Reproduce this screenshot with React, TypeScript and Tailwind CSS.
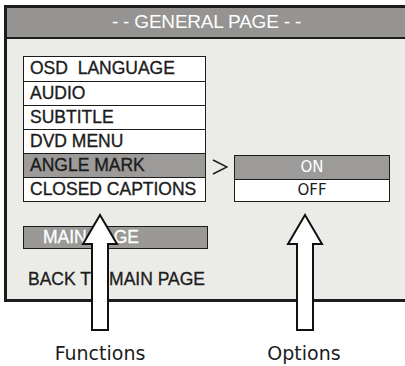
const functions = [
  "OSD  LANGUAGE",
  "AUDIO",
  "SUBTITLE",
  "DVD MENU",
  "ANGLE MARK",
  "CLOSED CAPTIONS",
];

const selected = "ANGLE MARK";

function UpArrow({ x }: { x: number }) {
  // tip at y=215, head base y=244, shaft down to y=330
  const d = `M ${x} 215 L ${x + 17} 244 L ${x + 8} 244 L ${x + 8} 330 L ${x - 8} 330 L ${x - 8} 244 L ${x - 17} 244 Z`;
  return <path d={d} fill="#fff" stroke="#111" strokeWidth="2" strokeLinejoin="miter" />;
}

export default function App() {
  return (
    <div className="relative h-[366px] w-[405px] overflow-hidden bg-white font-['Liberation_Sans',Arial,sans-serif]">
      <div className="ml-[4px] mt-[5px] w-[420px] border-y-[3px] border-l-[3px] border-[#1c1c1c] bg-[#ebebe7]">
        <div className="flex h-[31px] items-center border-b-[2px] border-[#1c1c1c] bg-[#959492] pr-[18px]">
          <span className="w-full text-center text-[19px] tracking-[-0.2px] text-white">- - GENERAL PAGE - -</span>
        </div>

        <div className="px-[16px] pt-[17px]">
          <div className="flex">
            <div className="w-[183px] border-[1.5px] border-[#1c1c1c]">
              {functions.map((name, i) => (
                <div
                  key={name}
                  className={
                    (name === selected ? "bg-[#9c9b99] " : "bg-white ") +
                    (i > 0 ? "border-t-[1.5px] border-[#1c1c1c] " : "") +
                    "flex h-[24px] items-center whitespace-pre pl-[6px] text-[17.5px] leading-none text-[#1c1c1c] [-webkit-text-stroke:0.35px_#1c1c1c]"
                  }
                >
                  {name}
                </div>
              ))}
            </div>

            <div className="flex flex-col justify-end">
              <div className="flex">
                <div className="flex h-[24px] w-[28px] items-center justify-center">
                  <svg width="16" height="16" viewBox="0 0 16 16">
                    <polyline points="1,1 15,8 1,15" fill="none" stroke="#1c1c1c" strokeWidth="1.4" />
                  </svg>
                </div>
                <div className="w-[156px] border-[1.5px] border-[#1c1c1c] font-['DejaVu_Sans',Verdana,sans-serif] text-[15px]">
                  <div className="flex h-[23px] items-center justify-center bg-[#9c9b99] text-white">ON</div>
                  <div className="flex h-[22px] items-center justify-center border-t-[1.5px] border-[#1c1c1c] bg-white text-[#1c1c1c]">
                    OFF
                  </div>
                </div>
              </div>
            </div>
          </div>

          <div className="mt-[24px] flex h-[23px] w-[185px] items-center border-[1.5px] border-[#1c1c1c] bg-[#9a9997] pl-[19px] text-[17.5px] text-white [-webkit-text-stroke:0.3px_#ffffff]">
            MAIN PAGE
          </div>

          <div className="pb-[10px] pl-[5px] pt-[20px] text-[17.5px] leading-[20px] text-[#1c1c1c] [-webkit-text-stroke:0.3px_#1c1c1c]">
            BACK TO MAIN PAGE
          </div>
        </div>
      </div>

      <div className="mt-[40px] flex font-['DejaVu_Sans',Verdana,sans-serif] text-[19px] leading-[22px] text-[#1c1c1c]">
        <div className="w-[200px] text-center">Functions</div>
        <div className="ml-[4px] w-[200px] text-center">Options</div>
      </div>

      <svg className="pointer-events-none absolute left-0 top-0" width="405" height="366">
        <UpArrow x={100} />
        <UpArrow x={305} />
      </svg>
    </div>
  );
}
